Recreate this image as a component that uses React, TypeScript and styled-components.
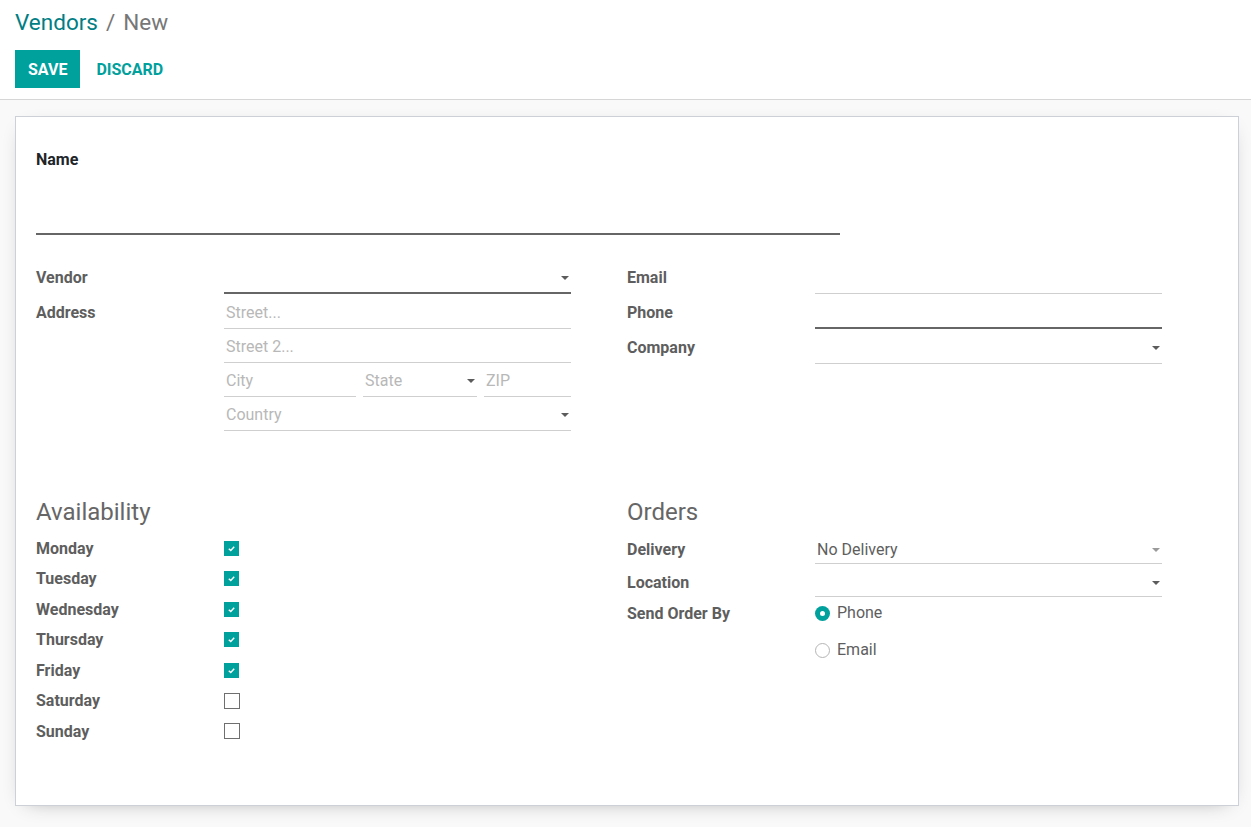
import React from 'react';
import styled, { createGlobalStyle } from 'styled-components';

const GlobalStyle = createGlobalStyle`
  body {
    margin: 0;
    font-family: Roboto, "Noto Sans", sans-serif;
    background: #f9f9f9;
    color: #666;
  }
`;

const TEAL = '#00A09D';

const ControlPanel = styled.div`
  background: #fff;
  height: 100px;
  box-sizing: border-box;
  border-bottom: 1px solid #d6d6d6;
  padding: 8px 15px 0;
`;

const Breadcrumb = styled.div`
  font-size: 22.5px;
  line-height: 28px;
  color: #777;
  display: flex;
  gap: 8px;
`;

const Crumb = styled.span`
  color: #017e84;
`;

const Buttons = styled.div`
  display: flex;
  align-items: center;
  margin-top: 14px;
`;

const Button = styled.button<{ $primary?: boolean }>`
  height: 38px;
  padding: 0 ${(p) => (p.$primary ? '13px' : '16px')};
  border: none;
  border-radius: 0;
  font-family: Roboto, sans-serif;
  font-size: 16px;
  font-weight: 700;
  text-transform: uppercase;
  cursor: pointer;
  background: ${(p) => (p.$primary ? TEAL : 'transparent')};
  color: ${(p) => (p.$primary ? '#fff' : TEAL)};
`;

const Main = styled.div`
  padding: 16px 12px 22px 15px;
`;

const Sheet = styled.div`
  background: #fff;
  border: 1px solid #cdd0d6;
  box-shadow: 0 5px 20px -12px rgba(0, 0, 0, 0.45);
  padding: 31px 20px 58px;
`;

const NameLabel = styled.div`
  font-size: 16px;
  line-height: 22px;
  padding-top: 1px;
  font-weight: 700;
  color: #212529;
`;

const NameInput = styled.div`
  width: 804px;
  height: 45px;
  box-sizing: border-box;
  margin-top: 19px;
  border-bottom: 2px solid #666;
`;

const Columns = styled.div<{ $top: number }>`
  display: grid;
  grid-template-columns: 535px 535px;
  column-gap: 56px;
  margin-top: ${(p) => p.$top}px;
`;

const Group = styled.div`
  display: flex;
  flex-direction: column;
`;

const Row = styled.div<{ $mb?: number }>`
  display: grid;
  grid-template-columns: 188px 347px;
  align-items: start;
  margin-bottom: ${(p) => p.$mb ?? 7}px;
`;

const Label = styled.div`
  font-size: 16px;
  line-height: 22px;
  padding-top: 1px;
  font-weight: 700;
  color: #5e5e5e;
`;

const Stack = styled.div`
  display: flex;
  flex-direction: column;
  gap: 6px;
`;

const Inline = styled.div`
  display: flex;
  gap: 7px;
`;

const Field = styled.div<{ $dark?: boolean; $w?: number; $h?: number }>`
  height: ${(p) => p.$h ?? 28}px;
  width: ${(p) => (p.$w ? `${p.$w}px` : 'auto')};
  box-sizing: border-box;
  border-bottom: ${(p) => (p.$dark ? '2px solid #666' : '1px solid #cfcfcf')};
  display: flex;
  align-items: flex-start;
  font-size: 16px;
  line-height: 22px;
  padding: 1px 0 0 2px;
  color: #5e5e5e;
`;

const Placeholder = styled.span`
  color: #b8b8b8;
`;

const Caret = styled.span<{ $light?: boolean }>`
  margin-left: auto;
  margin-right: 2px;
  margin-top: 9px;
  width: 0;
  height: 0;
  border-left: 4px solid transparent;
  border-right: 4px solid transparent;
  border-top: 4px solid ${(p) => (p.$light ? '#9a9a9a' : '#5c5c5c')};
`;

const Heading = styled.div`
  font-size: 24px;
  line-height: 30px;
  color: #666;
  margin-bottom: 6px;
`;

const DayRow = styled.div`
  display: grid;
  grid-template-columns: 188px 347px;
  align-items: center;
  height: 30.5px;
`;

const Check = styled.span<{ $on: boolean }>`
  width: ${(p) => (p.$on ? 15 : 16)}px;
  height: ${(p) => (p.$on ? 15 : 16)}px;
  box-sizing: border-box;
  background: ${(p) => (p.$on ? TEAL : '#fff')};
  border: ${(p) => (p.$on ? 'none' : '1.5px solid #6f6f6f')};
  display: flex;
  align-items: center;
  justify-content: center;
`;

const OrdersBody = styled.div`
  padding-top: 5px;
`;

const Radios = styled.div`
  display: flex;
  flex-direction: column;
  gap: 15px;
`;

const RadioItem = styled.div`
  display: flex;
  align-items: center;
  gap: 7px;
  font-size: 16px;
  line-height: 22px;
  color: #5e5e5e;
`;

const RadioDot = styled.span<{ $on: boolean }>`
  width: 15px;
  height: 15px;
  box-sizing: border-box;
  border-radius: 50%;
  background: ${(p) => (p.$on ? TEAL : '#fff')};
  border: ${(p) => (p.$on ? 'none' : '1px solid #b5b5b5')};
  display: flex;
  align-items: center;
  justify-content: center;
  &::after {
    content: '';
    display: ${(p) => (p.$on ? 'block' : 'none')};
    width: 5px;
    height: 5px;
    border-radius: 50%;
    background: #fff;
  }
`;

const days: [string, boolean][] = [
  ['Monday', true],
  ['Tuesday', true],
  ['Wednesday', true],
  ['Thursday', true],
  ['Friday', true],
  ['Saturday', false],
  ['Sunday', false],
];

function Tick() {
  return (
    <svg width="9" height="9" viewBox="0 0 10 10">
      <path d="M2 5.2 L4.2 7.2 L8 3" stroke="#fff" strokeWidth="1.6" fill="none" />
    </svg>
  );
}

function App() {
  return (
    <>
      <GlobalStyle />
      <ControlPanel>
        <Breadcrumb>
          <Crumb>Vendors</Crumb>
          <span>/</span>
          <span>New</span>
        </Breadcrumb>
        <Buttons>
          <Button $primary>Save</Button>
          <Button>Discard</Button>
        </Buttons>
      </ControlPanel>
      <Main>
        <Sheet>
          <NameLabel>Name</NameLabel>
          <NameInput />

          <Columns $top={31}>
            <Group>
              <Row>
                <Label>Vendor</Label>
                <Field $dark>
                  <Caret />
                </Field>
              </Row>
              <Row>
                <Label>Address</Label>
                <Stack>
                  <Field>
                    <Placeholder>Street...</Placeholder>
                  </Field>
                  <Field>
                    <Placeholder>Street 2...</Placeholder>
                  </Field>
                  <Inline>
                    <Field $w={132}>
                      <Placeholder>City</Placeholder>
                    </Field>
                    <Field $w={114}>
                      <Placeholder>State</Placeholder>
                      <Caret />
                    </Field>
                    <Field $w={87}>
                      <Placeholder>ZIP</Placeholder>
                    </Field>
                  </Inline>
                  <Field>
                    <Placeholder>Country</Placeholder>
                    <Caret />
                  </Field>
                </Stack>
              </Row>
            </Group>
            <Group>
              <Row>
                <Label>Email</Label>
                <Field />
              </Row>
              <Row>
                <Label>Phone</Label>
                <Field $dark />
              </Row>
              <Row>
                <Label>Company</Label>
                <Field>
                  <Caret />
                </Field>
              </Row>
            </Group>
          </Columns>

          <Columns $top={59}>
            <Group>
              <Heading>Availability</Heading>
              {days.map(([d, on]) => (
                <DayRow key={d}>
                  <Label>{d}</Label>
                  <Check $on={on}>{on && <Tick />}</Check>
                </DayRow>
              ))}
            </Group>
            <Group>
              <Heading>Orders</Heading>
              <OrdersBody>
                <Row $mb={7}>
                  <Label>Delivery</Label>
                  <Field $h={26}>
                    No Delivery
                    <Caret $light />
                  </Field>
                </Row>
                <Row $mb={5}>
                  <Label>Location</Label>
                  <Field $h={26}>
                    <Caret />
                  </Field>
                </Row>
                <Row>
                  <Label>Send Order By</Label>
                  <Radios>
                    <RadioItem>
                      <RadioDot $on />
                      Phone
                    </RadioItem>
                    <RadioItem>
                      <RadioDot $on={false} />
                      Email
                    </RadioItem>
                  </Radios>
                </Row>
              </OrdersBody>
            </Group>
          </Columns>
        </Sheet>
      </Main>
    </>
  );
}

export default App;
